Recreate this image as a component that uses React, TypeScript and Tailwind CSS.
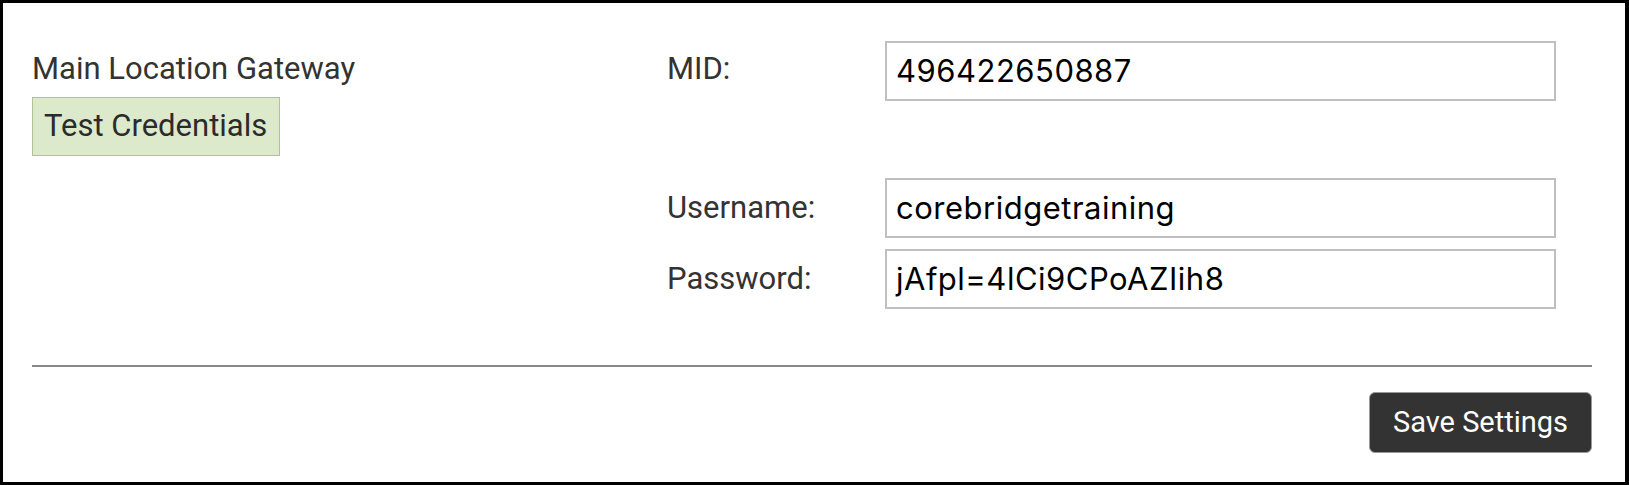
import React from "react";

const labelFont = { fontFamily: "Roboto, 'Liberation Sans', sans-serif" };
const inputFont = { fontFamily: "Inter, 'Liberation Sans', sans-serif" };

function Field({ value }: { value: string }) {
  return (
    <div
      className="h-[60px] w-[671px] border-2 border-[#bfbfbf] bg-white flex items-center pl-[9px] text-[31px] tracking-[0.5px] text-black"
      style={inputFont}
    >
      {value}
    </div>
  );
}

export default function App() {
  return (
    <div className="w-[1629px] h-[485px] bg-white border-black border-l-[3px] border-t-[3px] border-b-[3px] border-r-[4px] pl-[29px] pr-[33px] pt-[38px] box-border">
      <div className="flex">
        <div className="w-[635px] pt-[10px]" style={labelFont}>
          <div className="text-[31px] leading-[36px] text-[#333333]">Main Location Gateway</div>
          <button
            className="mt-[10px] h-[59px] w-[248px] border border-[#b3c193] bg-[#dde9cb] text-[31px] text-[#2b2b2b] flex items-center pl-[11px]"
            style={labelFont}
          >
            Test Credentials
          </button>
        </div>
        <div className="flex flex-col">
          <div className="flex">
            <div className="w-[218px] pt-[10px] text-[31px] leading-[36px] text-[#333333]" style={labelFont}>
              MID:
            </div>
            <Field value="496422650887" />
          </div>
          <div className="flex items-center mt-[77px]">
            <div className="w-[218px] text-[31px] leading-[36px] text-[#333333]" style={labelFont}>
              Username:
            </div>
            <Field value="corebridgetraining" />
          </div>
          <div className="flex items-center mt-[11px]">
            <div className="w-[218px] text-[31px] leading-[36px] text-[#333333]" style={labelFont}>
              Password:
            </div>
            <Field value="jAfpl=4lCi9CPoAZIih8" />
          </div>
        </div>
      </div>
      <div className="mt-[56px] h-[2px] bg-[#888888]" />
      <div className="flex justify-end mt-[25px]">
        <button
          className="h-[61px] w-[223px] rounded-[6px] border border-[#9a9a9a] bg-[#333333] text-white text-[29px] flex items-center justify-center"
          style={labelFont}
        >
          Save Settings
        </button>
      </div>
    </div>
  );
}
